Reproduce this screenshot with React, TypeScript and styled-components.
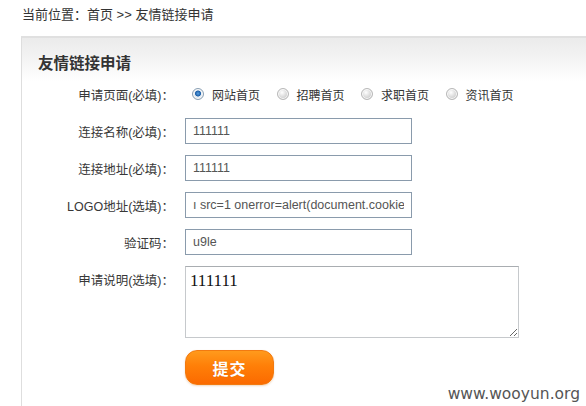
import React from "react";
import styled, { createGlobalStyle } from "styled-components";

const Global = createGlobalStyle`
  html, body { margin: 0; padding: 0; background: #fff; }
  body { font-family: "Liberation Sans", "Noto Sans CJK SC", sans-serif; color: #333; overflow: hidden; }
  * { box-sizing: border-box; }
`;

const Page = styled.div`
  position: relative;
  width: 586px;
  height: 406px;
  overflow: hidden;
`;

const Breadcrumb = styled.div`
  height: 30px;
  line-height: 30px;
  padding-left: 22px;
  font-size: 13px;
  color: #333;
`;

const Panel = styled.div`
  margin: 6px 0 0 21px;
  border-top: 2px solid #e0e0e0;
  border-left: 1px solid #dedede;
  height: 400px;
`;

const Header = styled.div`
  height: 43px;
  padding: 14px 0 0 16px;
  background: linear-gradient(#ebebeb 0px, #f3f3f3 20px, #fcfcfc 38px, #fff 43px);
`;

const Title = styled.h2`
  margin: 0;
  font-size: 15.5px;
  line-height: 20px;
  font-weight: bold;
  color: #333;
  font-family: "Noto Sans CJK SC", sans-serif;
`;

const Form = styled.div`
  display: grid;
  grid-template-columns: 152px auto;
  column-gap: 11px;
  row-gap: 11px;
  align-items: center;
`;

const Label = styled.div<{ $top?: boolean }>`
  text-align: right;
  font-size: 12.5px;
  color: #383838;
  align-self: ${(p) => (p.$top ? "start" : "center")};
  padding-top: ${(p) => (p.$top ? "4px" : "0")};
`;

const RadioGroup = styled.div`
  height: 26px;
  display: flex;
  align-items: center;
  font-size: 12px;
  color: #333;
`;

const RadioItem = styled.label`
  display: flex;
  align-items: center;
  margin-right: 9.5px;
`;

const RadioDot = styled.span<{ $checked?: boolean }>`
  width: 12px;
  height: 12px;
  border-radius: 50%;
  margin: 0 8px 0 7px;
  border: 1px solid ${(p) => (p.$checked ? "#8aa0b4" : "#b8b8b8")};
  background: ${(p) =>
    p.$checked
      ? "radial-gradient(circle at 50% 45%, #5aa0e0 0, #1c5fa8 2.6px, #eaf0f6 3.4px, #d8dde2 6px)"
      : "radial-gradient(circle at 40% 35%, #ffffff 0, #e6e6e6 3px, #cfcfcf 6px)"};
  box-shadow: inset 0 0 0 1px #fafafa;
`;

const TextInput = styled.input`
  width: 227px;
  height: 26px;
  border: 1px solid #8a9bac;
  padding: 0 7px;
  font-family: "Liberation Sans", sans-serif;
  font-size: 12.5px;
  color: #555;
  background: #fff;
  outline: none;
`;

const TextArea = styled.textarea`
  width: 334px;
  height: 72px;
  border: 1px solid #c6c9cc;
  border-top-color: #a9adb1;
  padding: 4px 4px;
  font-family: "Liberation Serif", serif;
  font-size: 17px;
  color: #111;
  resize: both;
  outline: none;
`;

const Submit = styled.button`
  grid-column: 2;
  margin-top: 1px;
  width: 89px;
  height: 35px;
  border: 1px solid #f27a10;
  border-radius: 12px;
  background: linear-gradient(#ff9a1c 0%, #ff7f08 45%, #fb6a00 100%);
  color: #fff;
  font-family: "Noto Sans CJK SC", sans-serif;
  font-size: 16px;
  font-weight: bold;
  letter-spacing: 1px;
  box-shadow: 0 1px 2px rgba(200, 100, 0, 0.25);
  text-shadow: 0 0 1px rgba(160, 60, 0, 0.4);
`;

const Watermark = styled.div`
  position: absolute;
  right: 6px;
  bottom: 3px;
  font-family: "DejaVu Sans", sans-serif;
  font-size: 15.5px;
  color: #555;
`;

const radios = [
  { text: "网站首页", checked: true },
  { text: "招聘首页" },
  { text: "求职首页" },
  { text: "资讯首页" },
];

export default function App() {
  return (
    <Page>
      <Global />
      <Breadcrumb>当前位置：首页 &gt;&gt; 友情链接申请</Breadcrumb>
      <Panel>
        <Header>
          <Title>友情链接申请</Title>
        </Header>
        <Form>
          <Label>申请页面(必填)：</Label>
          <RadioGroup>
            {radios.map((r) => (
              <RadioItem key={r.text}>
                <RadioDot $checked={r.checked} />
                {r.text}
              </RadioItem>
            ))}
          </RadioGroup>
          <Label>连接名称(必填)：</Label>
          <TextInput readOnly value="111111" />
          <Label>连接地址(必填)：</Label>
          <TextInput readOnly value="111111" />
          <Label>LOGO地址(选填)：</Label>
          <TextInput readOnly value="ı src=1 onerror=alert(document.cookie)" />
          <Label>验证码：</Label>
          <TextInput readOnly value="u9le" />
          <Label $top>申请说明(选填)：</Label>
          <TextArea readOnly value="111111" />
          <Submit>提交</Submit>
        </Form>
      </Panel>
      <Watermark>www.wooyun.org</Watermark>
    </Page>
  );
}
